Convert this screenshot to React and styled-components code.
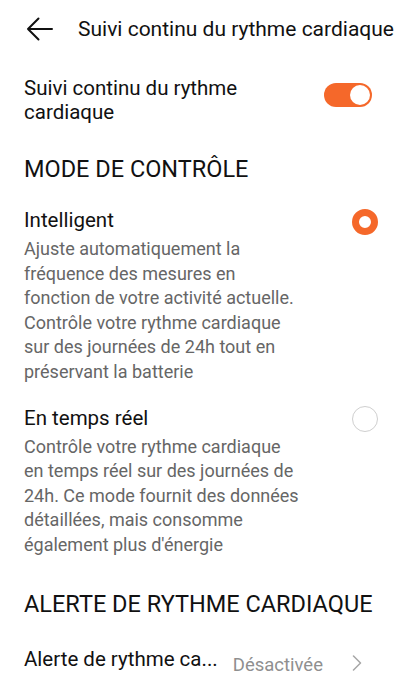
import React from "react";
import styled, { createGlobalStyle } from "styled-components";

const GlobalStyle = createGlobalStyle`
  body {
    margin: 0;
    background: #ffffff;
    font-family: Roboto, "Noto Sans", sans-serif;
    color: #1a1a1a;
  }
`;

const Page = styled.div`
  width: 400px;
  height: 684px;
  overflow: hidden;
  background: #ffffff;
`;

const Header = styled.div`
  display: flex;
  align-items: center;
  height: 58px;
  padding-left: 26px;
`;

const BackButton = styled.button`
  display: flex;
  align-items: center;
  justify-content: center;
  width: 28px;
  height: 28px;
  padding: 0;
  border: none;
  background: none;
  margin-right: 24px;
`;

const HeaderTitle = styled.h1`
  margin: 0;
  font-size: 21px;
  font-weight: 400;
  white-space: nowrap;
  color: #111;
`;

const Content = styled.div`
  padding: 0 22px 0 24px;
`;

const SwitchRow = styled.div`
  display: flex;
  align-items: flex-start;
  justify-content: space-between;
  padding: 18px 6px 7px 0;
`;

const RowLabel = styled.div`
  font-size: 20.5px;
  line-height: 24px;
  color: #111;
  max-width: 260px;
`;

const Switch = styled.div`
  flex: none;
  width: 48px;
  height: 24px;
  margin-top: 7px;
  border-radius: 12px;
  background: ${(p) => (p.$on ? "#f5682a" : "#d0d0d0")};
  display: flex;
  align-items: center;
  justify-content: ${(p) => (p.$on ? "flex-end" : "flex-start")};
  padding: 0 2px;
  box-sizing: border-box;
`;

const Knob = styled.div`
  width: 20px;
  height: 20px;
  border-radius: 50%;
  background: #fff;
`;

const SectionTitle = styled.h2`
  margin: 0;
  padding: 24px 0 12px;
  font-size: 23.5px;
  font-weight: 400;
  line-height: 28px;
  color: #111;
  white-space: nowrap;
`;

const Option = styled.div`
  display: flex;
  justify-content: space-between;
  align-items: flex-start;
  padding: 12px 0 8px;
`;

const OptionText = styled.div`
  max-width: 320px;
`;

const OptionTitle = styled.div`
  font-size: 20.5px;
  line-height: 26px;
  color: #111;
`;

const OptionDesc = styled.div`
  margin-top: 4px;
  font-size: 18px;
  line-height: 24.6px;
  color: #666;
  white-space: nowrap;
`;

const Radio = styled.div`
  flex: none;
  width: 26px;
  height: 26px;
  border-radius: 50%;
  box-sizing: border-box;
  margin-top: ${(p) => (p.$checked ? "2px" : "1px")};
  border: ${(p) => (p.$checked ? "7px solid #f5682a" : "1.5px solid #cfcfcf")};
  background: #fff;
`;

const LinkRow = styled.div`
  display: flex;
  align-items: center;
  padding-top: 11px;
  line-height: 24px;
`;

const LinkLabel = styled.div`
  flex: 1;
  font-size: 20.5px;
  color: #111;
  white-space: nowrap;
`;

const LinkValue = styled.div`
  font-size: 18.5px;
  color: #8f8f8f;
  margin-top: 12px;
  margin-right: 29px;
`;

const Chevron = styled.div`
  display: flex;
  margin-top: 9px;
  margin-right: 16px;
`;

const options = [
  {
    id: "smart",
    title: "Intelligent",
    desc: [
      "Ajuste automatiquement la",
      "fréquence des mesures en",
      "fonction de votre activité actuelle.",
      "Contrôle votre rythme cardiaque",
      "sur des journées de 24h tout en",
      "préservant la batterie",
    ],
    checked: true,
  },
  {
    id: "realtime",
    title: "En temps réel",
    desc: [
      "Contrôle votre rythme cardiaque",
      "en temps réel sur des journées de",
      "24h. Ce mode fournit des données",
      "détaillées, mais consomme",
      "également plus d'énergie",
    ],
    checked: false,
  },
];

const App = () => {
  return (
    <Page>
      <GlobalStyle />
      <Header>
        <BackButton>
          <svg width="28" height="28" viewBox="0 0 28 28" fill="none">
            <path
              d="M26 14H2M12.5 3.5L2 14l10.5 10.5"
              stroke="#111"
              strokeWidth="2"
              strokeLinecap="round"
              strokeLinejoin="round"
            />
          </svg>
        </BackButton>
        <HeaderTitle>Suivi continu du rythme cardiaque</HeaderTitle>
      </Header>
      <Content>
        <SwitchRow>
          <RowLabel>Suivi continu du rythme cardiaque</RowLabel>
          <Switch $on>
            <Knob />
          </Switch>
        </SwitchRow>

        <SectionTitle>MODE DE CONTRÔLE</SectionTitle>

        {options.map((opt) => (
          <Option key={opt.id}>
            <OptionText>
              <OptionTitle>{opt.title}</OptionTitle>
              <OptionDesc>
                {opt.desc.map((line) => (
                  <div key={line}>{line}</div>
                ))}
              </OptionDesc>
            </OptionText>
            <Radio $checked={opt.checked} />
          </Option>
        ))}

        <SectionTitle>ALERTE DE RYTHME CARDIAQUE</SectionTitle>

        <LinkRow>
          <LinkLabel>Alerte de rythme ca...</LinkLabel>
          <LinkValue>Désactivée</LinkValue>
          <Chevron>
            <svg width="10" height="16" viewBox="0 0 10 16" fill="none">
              <path
                d="M1.5 1l7 7-7 7"
                stroke="#a6a6a6"
                strokeWidth="1.5"
                strokeLinecap="round"
                strokeLinejoin="round"
              />
            </svg>
          </Chevron>
        </LinkRow>
      </Content>
    </Page>
  );
};

export default App;
